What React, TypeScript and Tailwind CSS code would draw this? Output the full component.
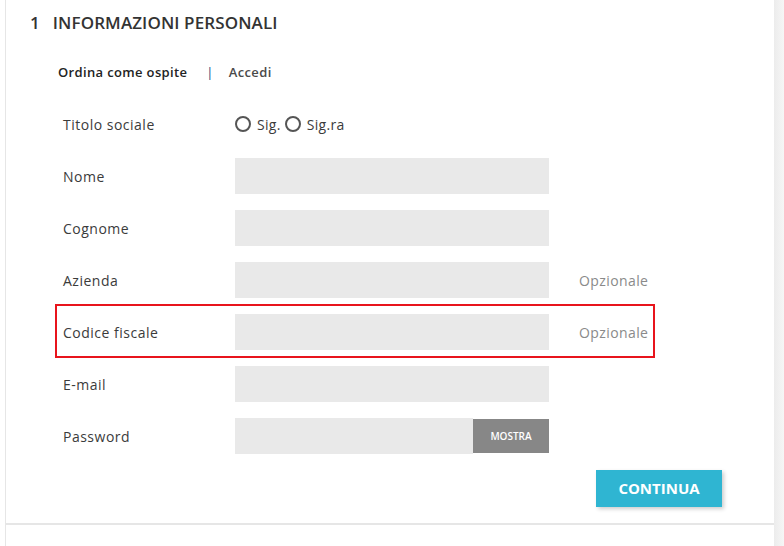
import { ReactNode } from "react";

const font = { fontFamily: '"Open Sans", "Liberation Sans", sans-serif' };

const Row = ({
  label,
  children,
  note,
  highlight,
}: {
  label: string;
  children: ReactNode;
  note?: string;
  highlight?: boolean;
}) => {
  return (
    <div className="relative ml-[49px] flex h-[52px] w-[600px] items-center">
      {highlight && (
        <span className="pointer-events-none absolute -top-[2px] bottom-0 left-0 right-0 border-2 border-[#e8141c]"></span>
      )}
      <label className="w-[180px] pl-[8px] text-[14px] tracking-[0.5px] text-[#3b3b3b]">{label}</label>
      <div className="flex w-[314px] items-center">{children}</div>
      {note && <span className="ml-[30px] text-[14px] tracking-[0.4px] text-[#8a8a8a]">{note}</span>}
    </div>
  );
};

const Field = () => <div className="h-[36px] w-[314px] bg-[#e9e9e9]"></div>;

const Radio = ({ label }: { label: string }) => (
  <span className="flex items-center">
    <span className="box-border size-[16px] rounded-full border-2 border-[#555]"></span>
    <span className="ml-[6px] mr-[4px] text-[14px] tracking-[0.3px] text-[#3b3b3b]">{label}</span>
  </span>
);

export default function App() {
  return (
    <div className="flex h-[546px] w-[784px] overflow-hidden bg-white" style={font}>
      <div className="ml-[5px] flex w-[769px] flex-col border-l border-[#e6e6e6]">
        <section className="flex flex-col bg-white pb-[16px]">
          <h1 className="flex h-[44px] items-center pl-[24px] pt-[1px] text-[17px] font-semibold uppercase tracking-[0.1px] text-[#333]">
            <span>1</span>
            <span className="ml-[13px]">Informazioni personali</span>
          </h1>
          <nav className="flex h-[54px] items-center pl-[52px] pt-[4px] text-[13px] font-semibold tracking-[0.35px]">
            <span className="text-[#232323]">Ordina come ospite</span>
            <span className="ml-[19px] mr-[15px] font-normal text-[#24457a]">|</span>
            <span className="text-[#4a4a4a]">Accedi</span>
          </nav>
          <Row label="Titolo sociale">
            <Radio label="Sig." />
            <Radio label="Sig.ra" />
          </Row>
          <Row label="Nome">
            <Field />
          </Row>
          <Row label="Cognome">
            <Field />
          </Row>
          <Row label="Azienda" note="Opzionale">
            <Field />
          </Row>
          <Row label="Codice fiscale" note="Opzionale" highlight>
            <Field />
          </Row>
          <Row label="E-mail">
            <Field />
          </Row>
          <Row label="Password">
            <div className="h-[36px] flex-1 bg-[#e9e9e9]"></div>
            <button className="flex h-[34px] w-[76px] items-center justify-center bg-[#878787] text-[10px] font-semibold uppercase text-white">
              Mostra
            </button>
          </Row>
          <div className="mt-[8px] flex pl-[590px]">
            <button className="h-[37px] w-[126px] bg-[#2fb5d2] text-[15px] font-bold uppercase text-white shadow-[2px_2px_4px_rgba(0,0,0,0.2)]">
              Continua
            </button>
          </div>
        </section>
        <div className="h-[2px] bg-[#e6e6e6]"></div>
        <div className="flex-1 bg-white"></div>
      </div>
      <div className="flex-1 bg-gradient-to-r from-[#ececec] to-[#f6f6f6]"></div>
    </div>
  );
}
